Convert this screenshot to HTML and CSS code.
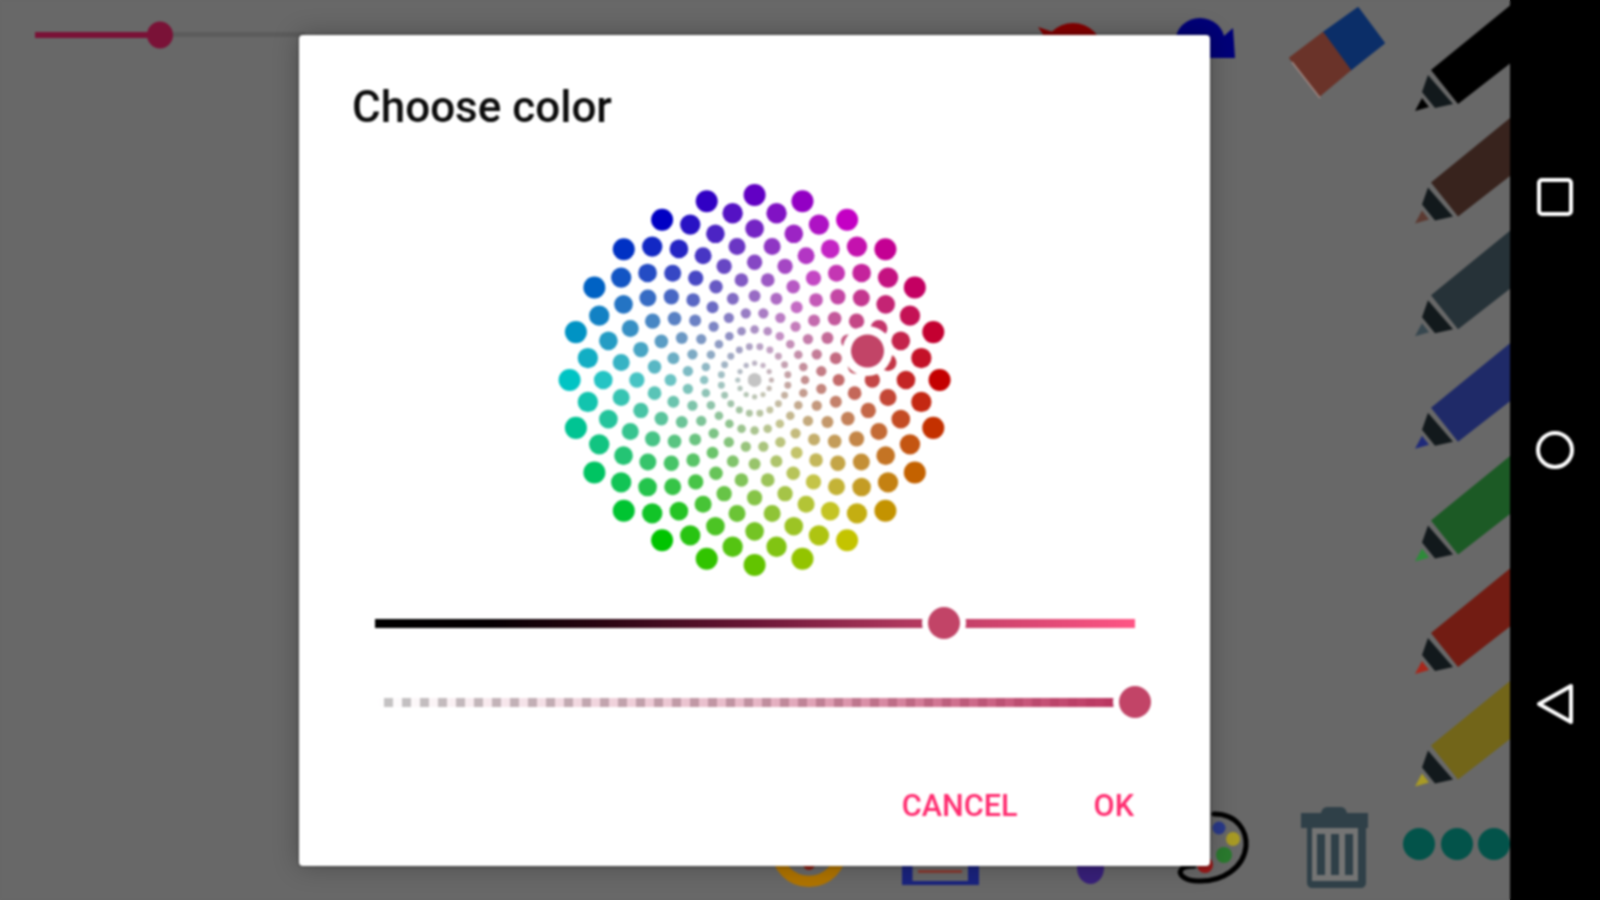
FILE: index.html
```html
<!DOCTYPE html>
<html lang="en">
<head>
<meta charset="utf-8">
<title>Choose color</title>
<link rel="stylesheet" href="styles.css">
</head>
<body>
<div class="screen">
  <main class="app">
    <svg class="canvas-art" viewBox="0 0 1510 900" width="1510" height="900" aria-hidden="true">
      <defs>
        <g id="pencil">
          <polygon class="pencil-body" points="1431,70 1510,5.5 1510,63.5 1458,104"/>
          <polygon class="pencil-band" points="1428,75 1453,104 1435,108 1422,92"/>
          <polygon class="pencil-tip" points="1415,111 1422,98 1429,107"/>
        </g>
      </defs>

      <rect class="stroke-rest" x="170" y="32" width="135" height="5"/>
      <rect class="stroke-done" x="35" y="32" width="115" height="6"/>
      <ellipse class="stroke-done" cx="160" cy="35" rx="13" ry="13.5"/>

      <circle class="undo" cx="1073" cy="53" r="30"/>
      <polygon class="undo" points="1038,27 1056,33 1048,42"/>
      <path class="redo" d="M1176 58V45A24 22 0 0 1 1224 36L1233 28L1235 58Z"/>

      <polygon class="eraser-blue" points="1358,8 1384,43 1350,70 1323,33"/>
      <polygon class="eraser-brown" points="1323,33 1350,70 1319,96 1290,58"/>
      <path class="eraser-line" d="M1292 62l28 36"/>

      <use href="#pencil" class="pen-black"/>
      <use href="#pencil" y="112.6" class="pen-brown"/>
      <use href="#pencil" y="225.2" class="pen-slate"/>
      <use href="#pencil" y="337.8" class="pen-indigo"/>
      <use href="#pencil" y="450.4" class="pen-green"/>
      <use href="#pencil" y="563" class="pen-red"/>
      <use href="#pencil" y="675.6" class="pen-yellow"/>

      <circle class="orange-ring" cx="809" cy="849" r="32.4"/>
      <circle class="orange-dot" cx="809" cy="864" r="6"/>
      <path class="blue-rect" fill-rule="evenodd" d="M902 850h77v35h-77zM912.5 850h55.5v31h-55.5z"/>
      <rect class="red-line" x="918" y="870" width="44" height="3"/>
      <ellipse class="purple-drop" cx="1090.5" cy="868" rx="13.5" ry="16"/>

      <path class="palette" d="M1214 814C1238 814 1247 832 1246 846C1244 868 1222 882 1198 881C1186 881 1178 875 1181 870C1183 866 1190 866 1194 866"/>
      <circle class="pal-blue" cx="1219" cy="828" r="6.5"/>
      <circle class="pal-yellow" cx="1233" cy="839" r="7"/>
      <circle class="pal-green" cx="1224" cy="855" r="8"/>
      <circle class="pal-red" cx="1205" cy="865" r="8"/>

      <path class="trash" d="M1321 813c1-4 3-6 7-6h12c4 0 6 2 7 6h21v15h-2v54c0 4-2 6-6 6h-47c-4 0-6-2-6-6v-54h-6v-15z"/>
      <rect class="trash-inner" x="1312" y="828" width="46" height="53"/>
      <path class="trash" d="M1317 834h8v41h-8zM1331 834h8v41h-8zM1345 834h8v41h-8z"/>

      <circle class="more" cx="1419" cy="844" r="16"/>
      <circle class="more" cx="1457" cy="844" r="16"/>
      <circle class="more" cx="1494" cy="844" r="16"/>
    </svg>

    <section class="dialog" role="dialog" aria-label="Choose color">
      <h1 class="dialog-title">Choose color</h1>
      <div class="wheel-wrap">
        <svg id="wheel" class="wheel" viewBox="0 0 400 400" width="400" height="400" role="img" aria-label="Color wheel"></svg>
      </div>
      <div class="slider">
        <div class="track track-light"></div>
        <span class="knob knob-light"></span>
      </div>
      <div class="slider slider-alpha">
        <div class="track track-alpha"></div>
        <span class="knob knob-alpha"></span>
      </div>
      <div class="actions">
        <button class="action" type="button">CANCEL</button>
        <button class="action" type="button">OK</button>
      </div>
    </section>
  </main>

  <nav class="navbar" aria-label="System navigation">
    <svg class="nav-icon" viewBox="0 0 40 40" width="40" height="40"><rect x="4" y="3" width="32" height="34" rx="3"/></svg>
    <svg class="nav-icon" viewBox="0 0 44 44" width="44" height="44"><circle cx="22" cy="22" r="17"/></svg>
    <svg class="nav-icon" viewBox="0 0 40 44" width="40" height="44"><polygon points="4,22 36,4 36,40"/></svg>
  </nav>
</div>
<script src="wheel.js"></script>
</body>
</html>
```

FILE: styles.css
```css
* { box-sizing: border-box; }

html, body {
  margin: 0;
  width: 1600px;
  height: 900px;
  overflow: hidden;
  background: linear-gradient(to right, #686868 1510px, #000 1510px);
  font-family: Roboto, "Liberation Sans", sans-serif;
}

.screen {
  display: flex;
  width: 1600px;
  height: 900px;
  filter: blur(0.8px);
}

.app {
  position: relative;
  flex: 1;
  background: #686868;
  overflow: hidden;
}

.canvas-art { display: block; }

.stroke-rest { fill: #5c5c5c; }
.stroke-done { fill: #7a1237; }
.undo { fill: #860000; }
.redo { fill: #000078; }
.eraser-blue { fill: #0b2e68; stroke: #0b2e68; stroke-width: 2; stroke-linejoin: round; }
.eraser-brown { fill: #6a3329; stroke: #6a3329; stroke-width: 2; stroke-linejoin: round; }
.eraser-line { stroke: #a08a85; stroke-width: 1.5; fill: none; }

.pencil-body { fill: var(--body); }
.pencil-band { fill: var(--band, #12191c); }
.pencil-tip { fill: var(--tip); }
.pen-black { --body: #000; --tip: #000; }
.pen-brown { --body: #38231d; --tip: #5c3a32; }
.pen-slate { --body: #263238; --tip: #37474f; }
.pen-indigo { --body: #1f2a68; --tip: #1f2a7a; }
.pen-green { --body: #1c5a25; --tip: #2e8b3a; }
.pen-red { --body: #721c13; --tip: #a8281c; }
.pen-yellow { --body: #726519; --tip: #a89a24; }

.orange-ring { fill: none; stroke: #b07400; stroke-width: 11.3; }
.orange-dot { fill: #8a1c10; }
.blue-rect { fill: #1a237e; }
.red-line { fill: #8a3a30; }
.purple-drop { fill: #38207a; }
.palette { fill: none; stroke: #000; stroke-width: 5; stroke-linecap: round; }
.pal-blue { fill: #2a3a8a; }
.pal-yellow { fill: #a89a24; }
.pal-green { fill: #2a7a2e; }
.pal-red { fill: #9a1818; }
.trash { fill: #2f4048; }
.trash-inner { fill: #747474; }
.more { fill: #03534a; }

.dialog {
  position: absolute;
  left: 299px;
  top: 35px;
  width: 911px;
  height: 831px;
  display: flex;
  flex-direction: column;
  padding-top: 48px;
  background: #fff;
  border-radius: 4px;
  box-shadow: 0 0 26px rgba(0, 0, 0, 0.28), 0 0 3px rgba(0, 0, 0, 0.5);
}

.dialog-title {
  margin: 0;
  padding-left: 53px;
  font-size: 44px;
  line-height: 48px;
  font-weight: 500;
  color: #0c0c0c;
}

.wheel-wrap {
  display: flex;
  justify-content: center;
  margin-top: 49px;
}

.wheel { display: block; }

.slider {
  position: relative;
  display: flex;
  align-items: center;
  height: 32px;
  margin: 27px 75px 0 76px;
}

.slider-alpha { margin-top: 47px; }

.track {
  flex: 1;
  height: 9px;
}

.track-light {
  background: linear-gradient(to right, #000 0%, #050002 15%, #2a0512 30%, #6b1636 50%, #b0385e 70%, #ff5585 100%);
}

.track-alpha {
  background:
    linear-gradient(to right, rgba(186, 48, 92, 0) 0%, rgba(186, 48, 92, 0.35) 50%, rgba(186, 48, 92, 1) 100%),
    repeating-linear-gradient(to right, #fff 0 9px, #c4c4c4 9px 18px);
}

.knob {
  position: absolute;
  top: 0;
  width: 32px;
  height: 32px;
  border-radius: 50%;
  background: #c24467;
  box-shadow: 0 0 0 6px #fff;
}

.knob-light { left: 553px; }
.knob-alpha { left: 744px; }

.actions {
  display: flex;
  justify-content: flex-end;
  gap: 76px;
  margin-top: 72px;
  padding-right: 76px;
}

.action {
  padding: 0;
  border: 0;
  background: none;
  font-family: inherit;
  font-size: 30.6px;
  line-height: 32px;
  font-weight: 500;
  color: #ff2d70;
}

.navbar {
  display: flex;
  flex-direction: column;
  align-items: center;
  justify-content: space-between;
  flex: 0 0 90px;
  padding: 177px 0 174px;
  background: #000;
}

.nav-icon {
  fill: none;
  stroke: #fff;
  stroke-width: 4;
  stroke-linejoin: round;
}
```

FILE: wheel.js
```js
// Flower-style colour wheel: rings of dots whose hue follows the angle
// and whose saturation follows the distance from the centre.
(function () {
  var NS = "http://www.w3.org/2000/svg";
  var svg = document.getElementById("wheel");
  var cx = 199.6, cy = 200, density = 12, maxRadius = 185, strokeWidth = 1.6;
  var cSize = maxRadius / (density - 1) / 2, value = 0.77;

  function hsv(h, s, v) {
    var f = function (n) {
      var k = (n + h / 60) % 6;
      return Math.round(255 * (v - v * s * Math.max(0, Math.min(k, 4 - k, 1))));
    };
    return "rgb(" + f(5) + "," + f(3) + "," + f(1) + ")";
  }

  function dot(x, y, r, fill) {
    var c = document.createElementNS(NS, "circle");
    c.setAttribute("cx", x.toFixed(2));
    c.setAttribute("cy", y.toFixed(2));
    c.setAttribute("r", r.toFixed(2));
    c.setAttribute("fill", fill);
    svg.appendChild(c);
  }

  for (var i = 0; i < density; i++) {
    var p = i / (density - 1);
    var jitter = (i - density / 2) / density;
    var radius = maxRadius * p;
    var size = Math.max(1.5 + strokeWidth, cSize + (i === 0 ? 0 : cSize * 1.2 * jitter));
    var count = Math.max(1, Math.floor(0.975 * Math.PI / Math.asin(Math.min(1, size / radius)) + 0.5));
    var total = Math.min(count, density * 2);
    for (var j = 0; j < total; j++) {
      var angle = Math.PI * 2 * j / total + (Math.PI / total) * ((i + 1) % 2);
      dot(cx + radius * Math.cos(angle), cy + radius * Math.sin(angle),
          size - strokeWidth, hsv(angle * 180 / Math.PI, p, value));
    }
  }

  // selection marker
  dot(312.5, 171, 25, "#fff");
  dot(312.5, 171, 16.5, "#c24467");
})();
```
